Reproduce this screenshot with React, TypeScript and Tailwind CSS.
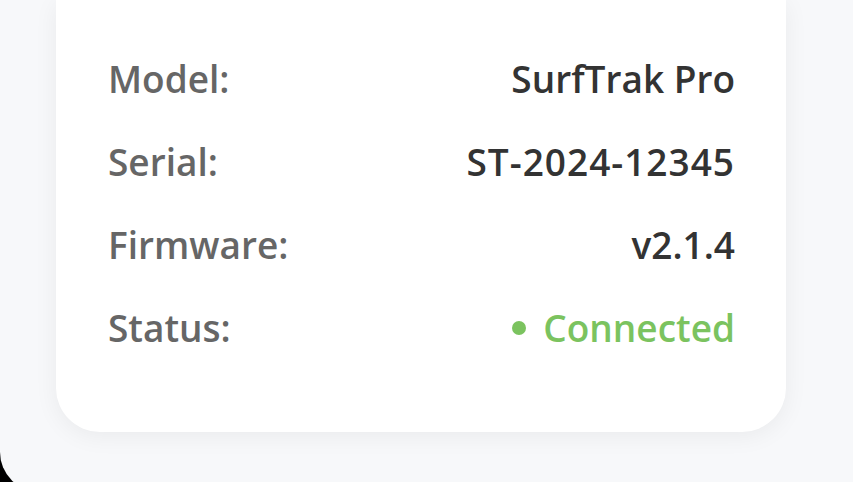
import React from "react";

const rows: { label: string; value: string; status?: boolean }[] = [
  { label: "Model:", value: "SurfTrak Pro" },
  { label: "Serial:", value: "ST-2024-12345" },
  { label: "Firmware:", value: "v2.1.4" },
  { label: "Status:", value: "Connected", status: true },
];

export default function App() {
  return (
    <div className="w-[853px] h-[482px] overflow-hidden bg-black">
      <div className="w-full h-[492px] bg-[#f7f8fa] rounded-bl-[40px]">
        <div
          className="ml-[56px] w-[730px] bg-white rounded-b-[44px] shadow-[0_4px_24px_rgba(0,0,0,0.06)] pt-[37px] pb-[63px] pl-[52px] pr-[51px]"
          style={{ fontFamily: '"Open Sans", "Noto Sans", sans-serif' }}
        >
          {rows.map((r) => (
            <div
              key={r.label}
              className="flex items-center justify-between h-[83px] text-[37px] font-semibold"
            >
              <span className="text-[#666666]">{r.label}</span>
              {r.status ? (
                <span className="flex items-center text-[#7bc35f]">
                  <span className="w-[14px] h-[14px] rounded-full bg-[#7bc35f] mr-[17px]" />
                  {r.value}
                </span>
              ) : (
                <span className={r.label === "Serial:" ? "text-[#333333] tracking-[1px]" : "text-[#333333]"}>{r.value}</span>
              )}
            </div>
          ))}
        </div>
      </div>
    </div>
  );
}
